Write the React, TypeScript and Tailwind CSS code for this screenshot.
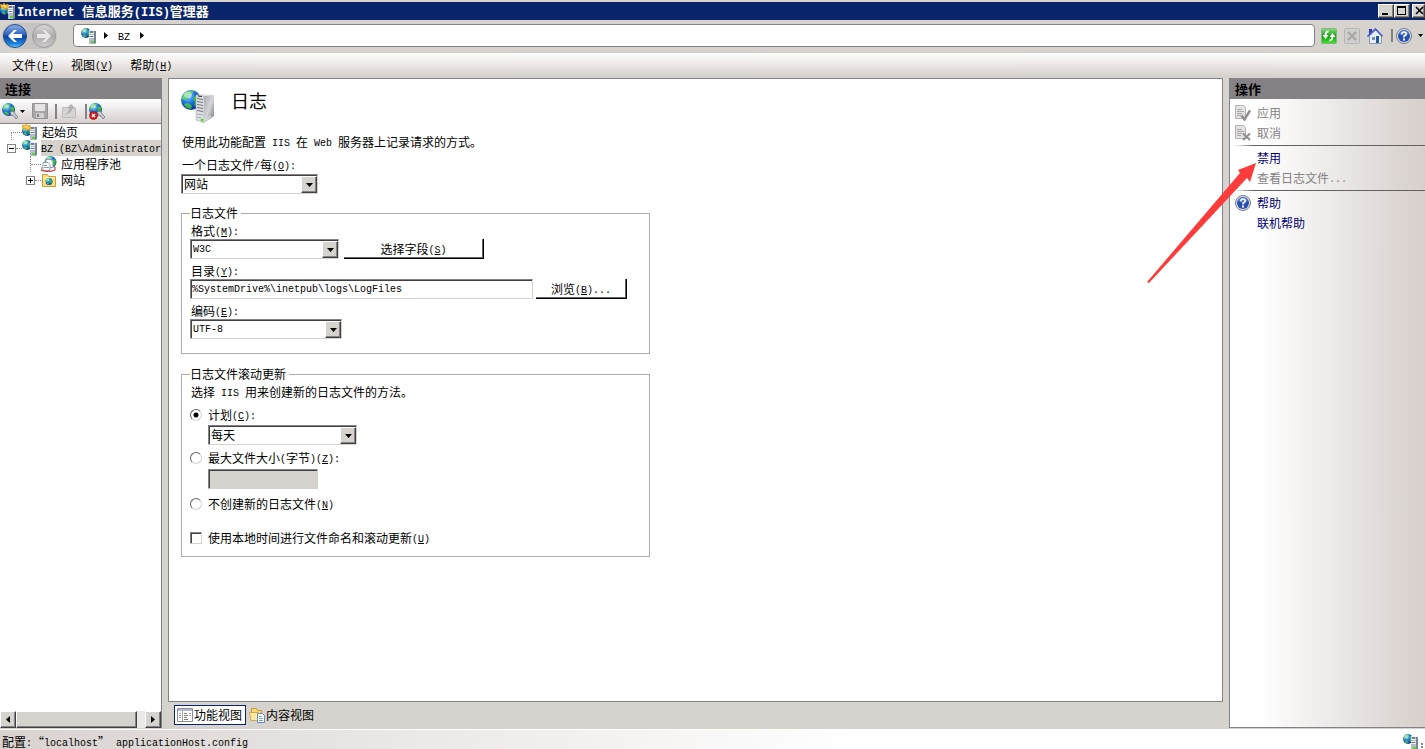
import { useState } from 'react';
import type { ReactNode } from 'react';
import clsx from 'clsx';

const raised =
  'border border-t-white border-l-white border-r-[#424142] border-b-[#424142] bg-[#d6d3ce] shadow-[inset_-1px_-1px_0_#848284]';
const sunken =
  'border border-t-[#848284] border-l-[#848284] border-r-[#d6d3ce] border-b-[#d6d3ce] shadow-[inset_1px_1px_0_#424142]';

// Latin runs use the half-width mono face, "&" marks the mnemonic letter
function Txt({ children }: { children: string }) {
  return (
    <>
      {children.split(/([\x20-\x7e]+)/).map((run, i) => {
        if (i % 2 === 0) return run;
        const [before, after] = run.split('&');
        return (
          <span
            key={i}
            className="align-[1px] whitespace-pre font-['Liberation_Mono',monospace] text-[10px] leading-none"
          >
            {before}
            {after && (
              <>
                <u className="underline-offset-1">{after[0]}</u>
                {after.slice(1)}
              </>
            )}
          </span>
        );
      })}
    </>
  );
}

function Triangle({ dir, className }: { dir: 'left' | 'right' | 'down'; className?: string }) {
  const d = { left: 'M4 0v7L0 3.5z', right: 'M0 0v7l4-3.5z', down: 'M0 0h7L3.5 4z' }[dir];
  return (
    <svg
      className={clsx('shrink-0', className)}
      width={dir === 'down' ? 7 : 4}
      height={dir === 'down' ? 4 : 7}
      aria-hidden="true"
    >
      <path d={d} fill="#000" />
    </svg>
  );
}

function Globe({ cx, cy, r }: { cx: number; cy: number; r: number }) {
  return (
    <g transform={`translate(${cx} ${cy}) scale(${r / 10})`}>
      <circle r="10" fill="url(#globe)" />
      <path d="M-8-5C-5-9 0-10 3-9L1-6-2-5-3-2-6 0-9-1zM2-2 6-5 9-3 9 3 6 7 3 5 4 2zM-7 4-3 3 1 6 0 9-4 8z" fill="url(#land)" />
      <ellipse cx="-3" cy="-5" rx="4" ry="3" fill="#fff" opacity=".45" />
    </g>
  );
}

function Defs() {
  return (
    <svg width="0" height="0" className="absolute" aria-hidden="true">
      <defs>
        <radialGradient id="globe" cx=".35" cy=".3" r=".8">
          <stop offset="0" stopColor="#8fd8ff" />
          <stop offset=".45" stopColor="#1f74e0" />
          <stop offset="1" stopColor="#0a1f8c" />
        </radialGradient>
        <linearGradient id="land" x1="0" y1="0" x2="1" y2="1">
          <stop offset="0" stopColor="#7fe07a" />
          <stop offset="1" stopColor="#12a026" />
        </linearGradient>
        <linearGradient id="side" x1="0" y1="0" x2="1" y2="1">
          <stop offset="0" stopColor="#a9acb0" />
          <stop offset=".5" stopColor="#d4d6d8" />
          <stop offset="1" stopColor="#6f7378" />
        </linearGradient>
        <linearGradient id="blueBtn" x1="0" y1="0" x2="0" y2="1">
          <stop offset="0" stopColor="#8fb2e6" />
          <stop offset=".45" stopColor="#2c62bd" />
          <stop offset=".5" stopColor="#0d3f9e" />
          <stop offset=".85" stopColor="#1f86e0" />
          <stop offset="1" stopColor="#6fd8ff" />
        </linearGradient>
        <linearGradient id="grayBtn" x1="0" y1="0" x2="0" y2="1">
          <stop offset="0" stopColor="#dcdadb" />
          <stop offset=".5" stopColor="#adabac" />
          <stop offset="1" stopColor="#cfcdce" />
        </linearGradient>
        <linearGradient id="greenBtn" x1="0" y1="0" x2="0" y2="1">
          <stop offset="0" stopColor="#8ade7c" />
          <stop offset=".5" stopColor="#13a012" />
          <stop offset="1" stopColor="#3fe62a" />
        </linearGradient>
      </defs>
    </svg>
  );
}

function ServerIcon({ star }: { star?: boolean }) {
  return (
    <svg width="16" height="16" viewBox="0 0 16 16" className="shrink-0" aria-hidden="true">
      <Globe cx={5} cy={star ? 7 : 5} r={5} />
      <path d="M8 2h7v13l-2 1H8z" fill="#b4bccb" />
      <path d="M13 2h2v13l-2 1z" fill="#7d8592" />
      <path d="M8 2.500h7M8 5.500h5M8 7.500h5M8 9.500h5" stroke="#eef2f8" />
      <path d="M9 4h3" stroke="#39465c" />
      <path d="M9 8.500h3" stroke="#68748a" />
      <rect x="10" y="13" width="3" height="2" fill="#4ce01c" />
      {star && (
        <>
          <path d="M0 1l3 1 1-2 1.500 2L8 1v5L6 5 5 7 4 4.500 1 5z" fill="#ffc02a" stroke="#d98a0c" strokeWidth=".6" />
          <path d="M3 2.500l2 .5 1 1.500" fill="none" stroke="#fff2b8" />
        </>
      )}
    </svg>
  );
}

function BigServerIcon() {
  return (
    <svg width="34" height="34" viewBox="0 0 34 34" className="shrink-0" aria-hidden="true">
      <Globe cx={10} cy={10} r={10} />
      <path d="M15 5 22 4l11 1-8 2z" fill="#e9eaec" />
      <path d="M15 5l8 1v27l-8-3z" fill="#dfe1e4" stroke="#9da0a5" strokeWidth=".5" />
      <path d="M23 6l10-1v21l-10 7z" fill="url(#side)" />
      <path d="M16 8.500l6 1M16 11.500l6 1M16 14.500l6 1M16 17.500l6 1M16 20.500l6 1" stroke="#70747a" />
      <path d="M17 6l4 .5" stroke="#25282d" />
      <path d="M16 24l6 1M16 27l4 1" stroke="#a6a9ae" />
      <circle cx="21" cy="30" r="1.500" fill="#52e01e" />
      <path d="M25 30l5-4" stroke="#eee" />
    </svg>
  );
}

function ConnectIcon({ remove }: { remove?: boolean }) {
  return (
    <svg width="17" height="17" viewBox="0 0 17 17" aria-hidden="true">
      <Globe cx={6.5} cy={6.5} r={6.5} />
      <path d="M8 9l3-1 3 4 2 2-2 2-2-3-3-1z" fill="#c9ced6" stroke="#6c7480" strokeWidth=".8" />
      {remove && (
        <>
          <circle cx="4.5" cy="12.5" r="4" fill="#d3201f" stroke="#8c1010" strokeWidth=".6" />
          <path d="M3 11l3 3m0-3-3 3" stroke="#fff" strokeWidth="1.3" />
        </>
      )}
    </svg>
  );
}

function HelpIcon() {
  return (
    <svg width="16" height="16" viewBox="0 0 16 16" className="shrink-0" aria-hidden="true">
      <circle cx="8" cy="8" r="7.5" fill="#dfe2e8" stroke="#777b84" />
      <circle cx="8" cy="8" r="6" fill="#2450b4" />
      <path d="M3 6a5.3 5.3 0 0 1 10 0q-5 3-10 0" fill="#7d9de0" opacity=".6" />
      <path d="M5.8 6.2q0-2.2 2.2-2.2t2.2 1.9Q10.200 7.200 8 8.200v1.300" fill="none" stroke="#fff" strokeWidth="1.600" />
      <rect x="7" y="10.500" width="2" height="2" fill="#fff" />
    </svg>
  );
}

function DocIcon({ mark }: { mark: 'check' | 'cross' }) {
  return (
    <svg width="16" height="16" viewBox="0 0 16 16" className="shrink-0" aria-hidden="true">
      <path d="M.5.500h8l2 2v11H.5z" fill="#e4e2e3" stroke="#b5b3b4" />
      <path d="M2 4.500h5M2 6.500h7M2 8.500h5M2 10.500h4" stroke="#a9a7a8" />
      {mark === 'check' ? (
        <path d="M6.500 10.500l3 4L15 5.500" fill="none" stroke="#8f8d8e" strokeWidth="2.400" />
      ) : (
        <path d="M8 8.500l7 6.500m0-6.500-7 6.500" stroke="#8f8d8e" strokeWidth="2" />
      )}
    </svg>
  );
}

function Combo({ id, options, className, latin }: { id: string; options: string[]; className: string; latin?: boolean }) {
  return (
    <div className={clsx('relative h-5', className)}>
      <select
        id={id}
        className={clsx(
          'block h-full w-full appearance-none bg-white pr-5 pl-[2px] outline-none',
          sunken,
          latin && "pt-px font-['Liberation_Mono',monospace] text-[10px]",
        )}
      >
        {options.map((o) => (
          <option key={o}>{o}</option>
        ))}
      </select>
      <span className={clsx('pointer-events-none absolute top-[2px] right-px bottom-px flex w-4 items-center justify-center', raised)}>
        <Triangle dir="down" />
      </span>
    </div>
  );
}

function PushButton({ children, className }: { children: string; className: string }) {
  return (
    <button className={clsx('h-5 border-r border-b border-black bg-white shadow-[inset_-1px_-1px_0_#636163]', className)}>
      <Txt>{children}</Txt>
    </button>
  );
}

function PanelHeader({ children }: { children: string }) {
  return <h2 className="h-5 shrink-0 bg-[#848284] pl-[5px] text-[13px] leading-5 font-bold">{children}</h2>;
}

function Expander({ open }: { open: boolean }) {
  return (
    <button aria-label={open ? '折叠' : '展开'} className="h-[9px] w-[9px] shrink-0">
      <svg width="9" height="9" shapeRendering="crispEdges" aria-hidden="true">
        <path d="M.5.500h8v8h-8z" fill="#fff" stroke="#848284" />
        <path d={open ? 'M2 4.500h5' : 'M2 4.500h5M4.500 2v5'} stroke="#000" />
      </svg>
    </button>
  );
}

const dots = 'shrink-0 border-t border-dotted border-[#848284]';

function ConnectionTree() {
  return (
    <ul className="flex-1 overflow-hidden bg-white whitespace-nowrap">
      <li className="flex h-4 items-center pl-[11px]">
        <span className={clsx('mt-2 h-2 w-[11px] border-l', dots)} />
        <ServerIcon star />
        <span className="pl-[4px]">起始页</span>
      </li>
      <li className="flex h-4 items-center pl-[7px]">
        <Expander open />
        <span className={clsx('w-[6px]', dots)} />
        <ServerIcon />
        <span className="ml-[3px] flex-1 bg-[#d6d3ce] leading-4">
          <Txt>BZ (BZ\Administrator</Txt>
        </span>
      </li>
      <li className="flex h-4 items-center pl-[30px]">
        <span className="h-4 shrink-0 border-l border-dotted border-[#848284]" />
        <span className={clsx('w-[10px]', dots)} />
        <svg width="16" height="16" viewBox="0 0 16 16" className="shrink-0" aria-hidden="true">
          <Globe cx={9.5} cy={6} r={6} />
          <path d="M5 3.500h5l2 2v6H5z" fill="#fff" stroke="#8c9bb0" />
          <path d="M2 6.500h5l2 2v6H2z" fill="#fff" stroke="#8c9bb0" />
          <path d="M3 9.500h3M3 11.500h5" stroke="#8c9bb0" />
          <path d="M0 11v3q7 3 14 0v-3" fill="none" stroke="#d2434a" strokeWidth="1.200" />
        </svg>
        <span className="pl-[4px]">应用程序池</span>
      </li>
      <li className="flex h-4 items-center pl-[26px]">
        <Expander open={false} />
        <span className={clsx('w-[6px]', dots)} />
        <svg width="16" height="16" viewBox="0 0 16 16" className="shrink-0" aria-hidden="true">
          <path d="M1.500 2.500h5l1 2h7v10h-13z" fill="#fbdf83" stroke="#c99b35" />
          <path d="M2 6h12" stroke="#fff3c0" />
          <Globe cx={8} cy={9.5} r={3.5} />
        </svg>
        <span className="pl-[4px]">网站</span>
      </li>
    </ul>
  );
}

function TitleBar() {
  return (
    <header className="mt-[2px] flex h-[18px] shrink-0 items-center bg-[#08246b] text-white">
      <ServerIcon star />
      <h1 className="flex-1 pl-px text-[13px] leading-[18px] font-bold whitespace-pre">
        <span className="font-['Liberation_Mono',monospace] text-[12px] leading-none">Internet </span>
        信息服务
        <span className="font-['Liberation_Mono',monospace] text-[12px] leading-none">(IIS)</span>
        管理器
      </h1>
      <div className="flex h-[14px]">
        <button aria-label="最小化" className={clsx('w-4', raised)}>
          <svg width="14" height="12" aria-hidden="true">
            <path d="M3 8h6v2H3z" />
          </svg>
        </button>
        <button aria-label="最大化" className={clsx('w-4', raised)}>
          <svg width="14" height="12" shapeRendering="crispEdges" aria-hidden="true">
            <path d="M2 1h9v9H2zM3 3v6h7V3z" fillRule="evenodd" />
          </svg>
        </button>
        <button aria-label="关闭" className={clsx('ml-[2px] w-[13px] overflow-hidden', raised)}>
          <svg width="12" height="12" aria-hidden="true">
            <path d="M3 2l7 7m0-7-7 7" stroke="#000" strokeWidth="1.600" />
          </svg>
        </button>
      </div>
    </header>
  );
}

function AddressBar() {
  return (
    <nav className="flex h-[33px] shrink-0 items-center pr-[2px] pb-[2px] pl-[2px]">
      <div className="mr-4 flex rounded-full bg-[#c6c3c3]">
        <button aria-label="后退">
          <svg width="26" height="26" viewBox="0 0 26 26" aria-hidden="true">
            <circle cx="13" cy="13" r="11.500" fill="url(#blueBtn)" stroke="#284a86" />
            <path d="M6 13l6-6h3l-4 4h9v4h-9l4 4h-3z" fill="#fff" />
          </svg>
        </button>
        <button aria-label="前进" className="ml-[3px]">
          <svg width="26" height="26" viewBox="0 0 26 26" aria-hidden="true">
            <circle cx="13" cy="13" r="11.500" fill="url(#grayBtn)" stroke="#9c9a9b" />
            <path d="M20 13l-6-6h-3l4 4H6v4h9l-4 4h3z" fill="#e9e8e8" />
          </svg>
        </button>
      </div>
      <div className="flex h-[23px] flex-1 items-center rounded border border-[#848284] bg-white pl-[7px]">
        <ServerIcon />
        <Triangle dir="right" className="ml-[7px]" />
        <a href="#bz" className="mx-[10px] leading-4">
          <Txt>BZ</Txt>
        </a>
        <Triangle dir="right" />
      </div>
      <div className="flex items-center pl-[6px]">
        <button aria-label="刷新">
          <svg width="16" height="16" viewBox="0 0 16 16" aria-hidden="true">
            <rect x=".5" y=".5" width="15" height="15" rx="1" fill="url(#greenBtn)" stroke="#8fae8c" />
            <path d="M7.500 3.500Q4.500 3.500 4.500 8M11.500 8q0 4.500-3 4.500" fill="none" stroke="#fff" strokeWidth="1.800" />
            <path d="M1.500 7h6l-3 4zM8.500 9h6l-3-4z" fill="#fff" />
          </svg>
        </button>
        <button aria-label="停止" disabled className="ml-[7px]">
          <svg width="16" height="16" viewBox="0 0 16 16" aria-hidden="true">
            <rect x=".5" y=".5" width="15" height="15" rx="1" fill="#cfcdcc" stroke="#b9b7b6" />
            <path d="M4 4l8 8m0-8-8 8" stroke="#a5a3a3" strokeWidth="2" />
          </svg>
        </button>
        <button aria-label="主页" className="ml-[7px]">
          <svg width="16" height="16" viewBox="0 0 16 16" aria-hidden="true">
            <path d="M2.500 7.500 9 2l5.500 6v7.500h-12z" fill="#e8eef8" stroke="#8b99b4" />
            <path d="M2 1h3v4L2 8z" fill="#2436c0" />
            <path d="M.5 8.500 8.500 1l7 7.500" fill="none" stroke="#4560cc" strokeWidth="1.600" />
            <rect x="9" y="8" width="3" height="7" fill="#1f5a9c" />
            <rect x="5" y="9" width="3" height="3" fill="#6f93b8" />
          </svg>
        </button>
        <span className="ml-2 h-[13px] w-[2px] bg-[#848284]" />
        <button aria-label="帮助" className="ml-[3px] flex items-center">
          <HelpIcon />
          <svg width="5" height="3" className="ml-[6px]" aria-hidden="true">
            <path d="M0 0h5L2.500 3z" />
          </svg>
        </button>
      </div>
    </nav>
  );
}

function ConnectionsPanel() {
  return (
    <aside className="flex w-[162px] shrink-0 flex-col border-t border-r border-[#848284]">
      <PanelHeader>连接</PanelHeader>
      <div className="flex h-[25px] shrink-0 items-center border-b border-[#848284] bg-linear-to-b from-white to-[#d6cfce] pl-[2px]">
        <button aria-label="创建新连接" className="flex items-center">
          <ConnectIcon />
          <svg width="5" height="3" className="ml-px" aria-hidden="true">
            <path d="M0 0h5L2.500 3z" />
          </svg>
        </button>
        <button aria-label="保存" disabled className="ml-[7px]">
          <svg width="16" height="16" viewBox="0 0 16 16" aria-hidden="true">
            <path d="M.5.500h15v15H2l-1.500-1.500z" fill="#a8a6a7" stroke="#949293" />
            <path d="M3 1h10v7H3z" fill="#e6e4e5" />
            <path d="M4 10h8v5H4z" fill="#d2d0d1" />
            <path d="M5 11h2v3H5z" fill="#848284" />
          </svg>
        </button>
        <span className="ml-[7px] h-[15px] w-[2px] bg-[#848284]" />
        <button aria-label="向上" disabled className="ml-1">
          <svg width="16" height="16" viewBox="0 0 16 16" aria-hidden="true">
            <path d="M1.500 4.500h5l1 1h7v9h-13z" fill="#d5d3d4" stroke="#bdbbbc" />
            <path d="M4 11q4-1 4-6H6l4-4 4 4h-3q0 6-7 6z" fill="#b3b1b2" />
          </svg>
        </button>
        <span className="ml-[8px] h-[15px] w-[2px] bg-[#848284]" />
        <button aria-label="删除连接" className="ml-[2px]">
          <ConnectIcon remove />
        </button>
      </div>
      <ConnectionTree />
      <div className="flex h-[17px] shrink-0 bg-[#ebe9e6]">
        <button aria-label="向左滚动" className={clsx('flex w-4 items-center justify-center', raised)}>
          <Triangle dir="left" />
        </button>
        <span className={clsx('w-[121px]', raised)} />
        <button aria-label="向右滚动" className={clsx('ml-auto flex w-4 items-center justify-center', raised)}>
          <Triangle dir="right" />
        </button>
      </div>
    </aside>
  );
}

const radioBox =
  'h-3 w-3 shrink-0 appearance-none rounded-full border border-t-[#636163] border-l-[#636163] border-r-[#d6d3ce] border-b-[#d6d3ce] bg-white checked:bg-[radial-gradient(circle,#000_2px,transparent_3px)]';

function RolloverFields() {
  const [mode, setMode] = useState('plan');

  const radio = (value: string, label: string) => (
    <label className="flex h-4 items-center gap-[6px]">
      <input type="radio" name="rollover" className={radioBox} checked={mode === value} onChange={() => setMode(value)} />
      <span>
        <Txt>{label}</Txt>
      </span>
    </label>
  );

  return (
    <fieldset className="mt-3 h-[191px] w-[469px] border border-[#adaaad] pl-2">
      <legend className="pr-[3px] leading-4">日志文件滚动更新</legend>
      <p className="pt-[2px] pl-px">
        <Txt>选择 IIS 用来创建新的日志文件的方法。</Txt>
      </p>
      <div className="pt-[7px]">
        {radio('plan', '计划(&C):')}
        <div className="pt-[2px] pl-[18px]">
          <Combo id="plan" options={['每天', '每小时', '每周', '每月']} className="w-[149px]" />
        </div>
      </div>
      <div className="pt-[5px]">
        {radio('size', '最大文件大小(字节)(&Z):')}
        <input
          aria-label="最大文件大小"
          disabled={mode !== 'size'}
          className={clsx('mt-[3px] ml-[18px] block h-5 w-[110px] px-1 disabled:bg-[#d6d3ce]', sunken)}
        />
      </div>
      <div className="pt-[7px]">{radio('none', '不创建新的日志文件(&N)')}</div>
      <label className="mt-[18px] flex h-4 items-center gap-[6px]">
        <input
          type="checkbox"
          className={clsx('h-3 w-3 shrink-0 appearance-none bg-white checked:bg-[#424142]', sunken)}
        />
        <span>
          <Txt>使用本地时间进行文件命名和滚动更新(&U)</Txt>
        </span>
      </label>
    </fieldset>
  );
}

function LogSettings() {
  return (
    <section className="flex-1 border border-[#848284] bg-white pt-[11px] pl-3">
      <div className="flex gap-4">
        <BigServerIcon />
        <h2 className="text-[18px] leading-5">日志</h2>
      </div>
      <p className="mt-[10px] pl-px">
        <Txt>使用此功能配置 IIS 在 Web 服务器上记录请求的方式。</Txt>
      </p>
      <label htmlFor="per" className="mt-[7px] block pl-px">
        <Txt>一个日志文件/每(&O):</Txt>
      </label>
      <Combo id="per" options={['网站', '服务器']} className="mt-px w-[137px]" />

      <fieldset className="mt-[11px] h-[149px] w-[469px] border border-[#adaaad] pl-2">
        <legend className="pr-[3px] leading-4">日志文件</legend>
        <label htmlFor="format" className="mt-[2px] block pl-px">
          <Txt>格式(&M):</Txt>
        </label>
        <div className="flex gap-[5px]">
          <Combo id="format" latin options={['W3C', 'IIS', 'NCSA']} className="w-[149px]" />
          <PushButton className="w-[140px]">选择字段(&S)</PushButton>
        </div>
        <label htmlFor="dir" className="mt-[4px] block pl-px">
          <Txt>目录(&Y):</Txt>
        </label>
        <div className="flex gap-[3px]">
          <input
            id="dir"
            defaultValue="%SystemDrive%\inetpub\logs\LogFiles"
            className={clsx("h-5 w-[343px] px-[1px] pt-px font-['Liberation_Mono',monospace] text-[10px]", sunken)}
          />
          <PushButton className="w-[91px]">浏览(&B)...</PushButton>
        </div>
        <label htmlFor="enc" className="mt-[4px] block pl-px">
          <Txt>编码(&E):</Txt>
        </label>
        <Combo id="enc" latin options={['UTF-8', 'ANSI']} className="w-[152px]" />
      </fieldset>

      <RolloverFields />
    </section>
  );
}

function ViewTabs() {
  return (
    <div className="flex h-[26px] shrink-0 items-center gap-[3px] pl-[6px]">
      <button className="flex h-5 items-center border border-[#08246b] bg-white px-[2px]">
        <svg width="16" height="16" viewBox="0 0 16 16" aria-hidden="true">
          <path d="M.5 1.500h15v13H.5z" fill="#fff" stroke="#8a8fa0" />
          <path d="M1 2h14v2H1z" fill="#b4bacb" />
          <path d="M5.500 4v10M2 6.500h2M2 8.500h2M2 10.500h2M12 6.500h2M12 8.500h2" stroke="#a0a6b8" />
          <path d="M7 6.500h3M7 8.500h4M7 10.500h3M7 12.500h4" stroke="#8f7c68" />
        </svg>
        <span className="px-px">功能视图</span>
      </button>
      <button className="flex h-5 items-center">
        <svg width="16" height="16" viewBox="0 0 16 16" aria-hidden="true">
          <path d="M2.500 1.500h5l1 2h4v9h-10z" fill="#f8d978" stroke="#c99b35" />
          <path d="M.5 5.500h9l1 8H2z" fill="#fde9a5" stroke="#d3a745" />
          <path d="M8.500 6.500h5l2 2v7h-7z" fill="#fff" stroke="#5f8fc4" />
          <path d="M10 9.500h3M10 11.500h4M10 13.500h4" stroke="#6fa3d8" />
        </svg>
        <span className="pl-px">内容视图</span>
      </button>
    </div>
  );
}

function ActionRow({ icon, children }: { icon?: ReactNode; children: ReactNode }) {
  return (
    <li className="flex h-5 items-center gap-[6px] pl-[5px]">
      <span className="w-4 shrink-0">{icon}</span>
      {children}
    </li>
  );
}

function ActionsPanel() {
  const rule = 'my-[2px] ml-1 h-px bg-linear-to-r from-transparent to-[#636163] to-10%';
  return (
    <aside className="relative flex w-[196px] shrink-0 flex-col border border-r-0 border-[#848284] bg-linear-to-r from-white from-15% to-[#d6cfcb]">
      <PanelHeader>操作</PanelHeader>
      <ul className="pt-1 text-[#00007b]">
        <ActionRow icon={<DocIcon mark="check" />}>
          <button disabled className="text-[#848284]">应用</button>
        </ActionRow>
        <ActionRow icon={<DocIcon mark="cross" />}>
          <button disabled className="text-[#848284]">取消</button>
        </ActionRow>
        <li className={rule} />
        <ActionRow>
          <a href="#disable">禁用</a>
        </ActionRow>
        <ActionRow>
          <span className="text-[#848284]">
            <Txt>查看日志文件...</Txt>
          </span>
        </ActionRow>
        <li className={rule} />
        <ActionRow icon={<HelpIcon />}>
          <a href="#help">帮助</a>
        </ActionRow>
        <ActionRow>
          <a href="#online">联机帮助</a>
        </ActionRow>
      </ul>
      {/* Arrow pointing at 禁用 */}
      <svg width="112" height="122" className="pointer-events-none absolute top-[83px] -left-[84px]" aria-hidden="true">
        <path d="M1 120 94 11 92 8 110 1 104 20 101 16 3 121z" fill="#ff3b3b" />
      </svg>
    </aside>
  );
}

export default function App() {
  return (
    <div className="flex min-h-screen flex-col overflow-hidden bg-[#d6d3ce] font-['Noto_Sans_CJK_SC',sans-serif] text-[12px] leading-4 text-black">
      <Defs />
      <TitleBar />
      <AddressBar />
      <div className="flex h-6 shrink-0 items-center gap-[17px] bg-linear-to-b from-white to-[#d6cfcb] pl-3">
        <button>
          <Txt>文件(&F)</Txt>
        </button>
        <button>
          <Txt>视图(&V)</Txt>
        </button>
        <button>
          <Txt>帮助(&H)</Txt>
        </button>
      </div>
      <div className="flex flex-1 gap-[6px] pt-px">
        <ConnectionsPanel />
        <main className="flex min-w-0 flex-1 flex-col">
          <LogSettings />
          <ViewTabs />
        </main>
        <ActionsPanel />
      </div>
      <footer className="mt-px flex h-5 shrink-0 items-center justify-between border-t border-white bg-linear-to-r from-[#d9d3d0] to-white to-60% pl-[2px]">
        <span className="pt-1">
          <Txt>配置:“localhost” applicationHost.config</Txt>
        </span>
        <span className="flex items-end gap-[2px] pt-1 pr-[2px]">
          <ServerIcon />
          <span className="mb-[2px] h-[5px] w-[2px] border-y-2 border-[#848284]" />
        </span>
      </footer>
    </div>
  );
}
